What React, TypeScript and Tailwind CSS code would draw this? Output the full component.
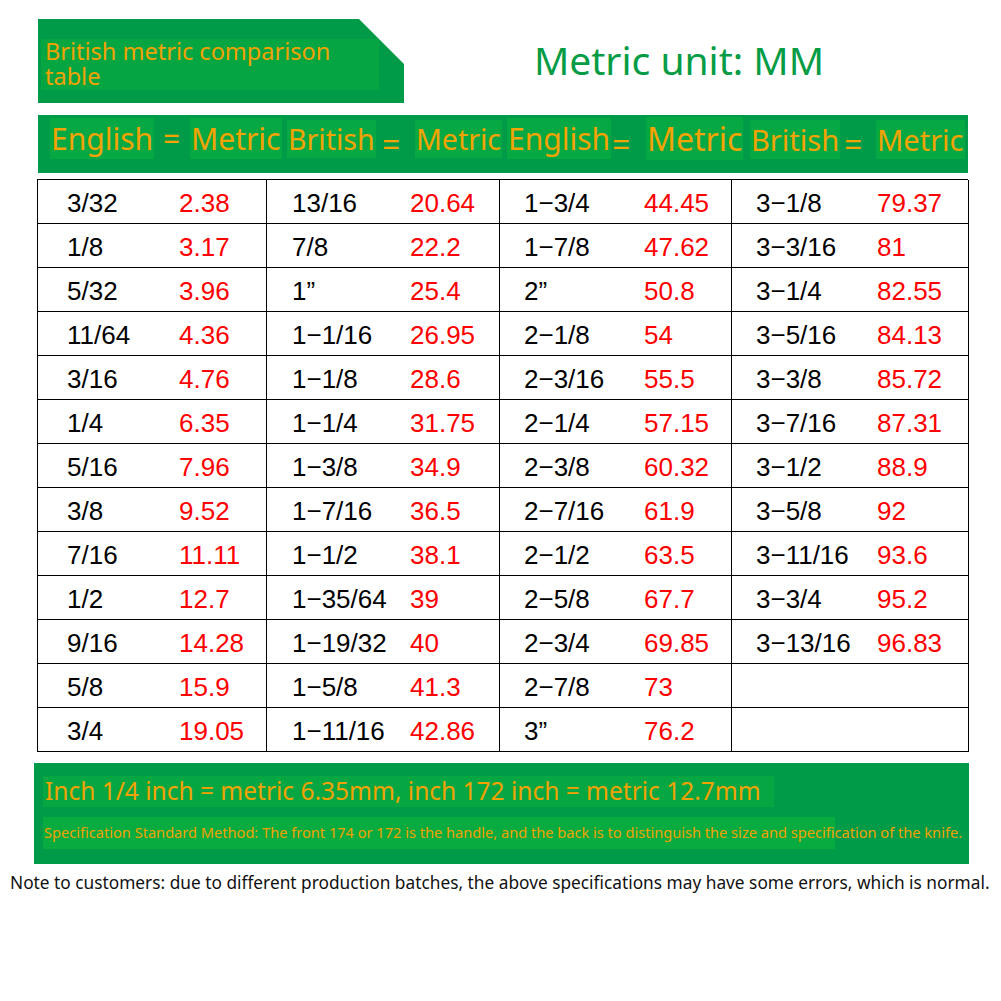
const ROWS: [string, string, string, string, string, string, string, string][] = [
  ['3/32', '2.38', '13/16', '20.64', '1−3/4', '44.45', '3−1/8', '79.37'],
  ['1/8', '3.17', '7/8', '22.2', '1−7/8', '47.62', '3−3/16', '81'],
  ['5/32', '3.96', '1”', '25.4', '2”', '50.8', '3−1/4', '82.55'],
  ['11/64', '4.36', '1−1/16', '26.95', '2−1/8', '54', '3−5/16', '84.13'],
  ['3/16', '4.76', '1−1/8', '28.6', '2−3/16', '55.5', '3−3/8', '85.72'],
  ['1/4', '6.35', '1−1/4', '31.75', '2−1/4', '57.15', '3−7/16', '87.31'],
  ['5/16', '7.96', '1−3/8', '34.9', '2−3/8', '60.32', '3−1/2', '88.9'],
  ['3/8', '9.52', '1−7/16', '36.5', '2−7/16', '61.9', '3−5/8', '92'],
  ['7/16', '11.11', '1−1/2', '38.1', '2−1/2', '63.5', '3−11/16', '93.6'],
  ['1/2', '12.7', '1−35/64', '39', '2−5/8', '67.7', '3−3/4', '95.2'],
  ['9/16', '14.28', '1−19/32', '40', '2−3/4', '69.85', '3−13/16', '96.83'],
  ['5/8', '15.9', '1−5/8', '41.3', '2−7/8', '73', '', ''],
  ['3/4', '19.05', '1−11/16', '42.86', '3”', '76.2', '', ''],
];

const COL_STYLE = [
  { pad: 'pl-[29px]', eng: 'w-[112px]' },
  { pad: 'pl-[25px]', eng: 'w-[118px]' },
  { pad: 'pl-[24px]', eng: 'w-[120px]' },
  { pad: 'pl-[24px]', eng: 'w-[121px]' },
];

// header words with the width each one takes in the band
const HEADER: { text: string; w: string; size: string; eq?: 'mid' | 'low' }[] = [
  { text: 'English', w: 'w-[113px]', size: 'text-[30px]' },
  { text: '=', w: 'w-[27px]', size: 'text-[30px]', eq: 'mid' },
  { text: 'Metric', w: 'w-[97px]', size: 'text-[30px]' },
  { text: 'British', w: 'w-[95px]', size: 'text-[28.5px]' },
  { text: '=', w: 'w-[33px]', size: 'text-[32px]', eq: 'low' },
  { text: 'Metric', w: 'w-[92px]', size: 'text-[28.5px]' },
  { text: 'English', w: 'w-[105px]', size: 'text-[30px]' },
  { text: '=', w: 'w-[34px]', size: 'text-[32px]', eq: 'low' },
  { text: 'Metric', w: 'w-[104px]', size: 'text-[32px]' },
  { text: 'British', w: 'w-[94px]', size: 'text-[29px]' },
  { text: '=', w: 'w-[32px]', size: 'text-[32px]', eq: 'low' },
  { text: 'Metric', w: 'w-[90px]', size: 'text-[29px]' },
];

function Cell({ col, eng, met }: { col: number; eng: string; met: string }) {
  const s = COL_STYLE[col];
  return (
    <div className={`h-[44px] border-r border-b border-black flex items-center pt-[4px] ${s.pad}`}>
      <span className={`${s.eng} shrink-0 text-black`}>{eng}</span>
      <span className="text-[#ff0000]">{met}</span>
    </div>
  );
}

export default function App() {
  return (
    <div className="w-[1001px] h-[1001px] bg-white overflow-hidden font-['Noto_Sans',sans-serif]">
      {/* title row */}
      <div className="flex items-center pt-[19px]">
        <div className="ml-[38px] w-[366px] h-[84px] bg-[#009b48] [clip-path:polygon(0_0,87.7%_0,100%_53.5%,100%_100%,0_100%)] pt-[20px] pl-[3px]">
          <div className="w-[338px] h-[51px] bg-[#05a642] pl-[4px] text-[23.5px] leading-[25px] text-[#f2a200]">
            British metric comparison
            <br />
            table
          </div>
        </div>
        <div className="flex-1 text-center text-[39px] text-[#059c45] -mt-[2px] pr-[47px]">Metric unit: MM</div>
      </div>

      {/* header band */}
      <div className="ml-[38px] mt-[12px] w-[930px] h-[58px] bg-[#009b48] flex items-center pl-[12px] pb-[10px] text-[#f5a300] leading-none">
        {HEADER.map((h, i) => (
          <div key={i} className={`${h.w} ${h.size} shrink-0 whitespace-nowrap`}>
            {h.eq ? (
              <span className={h.eq === 'low' ? 'inline-block translate-y-[5px]' : ''}>=</span>
            ) : (
              <span className="bg-[#06a843] px-[1px]">{h.text}</span>
            )}
          </div>
        ))}
      </div>

      {/* table */}
      <div className="ml-[37px] mt-[6px] w-[931px] grid grid-cols-[229px_233px_232px_237px] border-t border-l border-black font-['Liberation_Sans',Arial,sans-serif] text-[26px]">
        {ROWS.map((r, i) => (
          <div key={i} className="contents">
            <Cell col={0} eng={r[0]} met={r[1]} />
            <Cell col={1} eng={r[2]} met={r[3]} />
            <Cell col={2} eng={r[4]} met={r[5]} />
            <Cell col={3} eng={r[6]} met={r[7]} />
          </div>
        ))}
      </div>

      {/* footer band */}
      <div className="ml-[34px] mt-[11px] w-[935px] h-[101px] bg-[#009b48] pt-[13px] pl-[9px] text-[#f2a200]">
        <div className="w-[731px] bg-[#06a742] h-[31px] flex items-center pl-[2px] text-[24.5px] whitespace-nowrap">
          Inch 1/4 inch = metric 6.35mm, inch 172 inch = metric 12.7mm
        </div>
        <div className="mt-[10px] w-[792px] bg-[#07ab3f] h-[32px] flex items-center pl-[1px] text-[14.6px] whitespace-nowrap">
          Specification Standard Method: The front 174 or 172 is the handle, and the back is to distinguish the size and specification of the knife.
        </div>
      </div>

      {/* note */}
      <div className="mt-[6px] pl-[10px] text-[17.3px] text-[#111] whitespace-nowrap">
        Note to customers: due to different production batches, the above specifications may have some errors, which is normal.
      </div>
    </div>
  );
}
